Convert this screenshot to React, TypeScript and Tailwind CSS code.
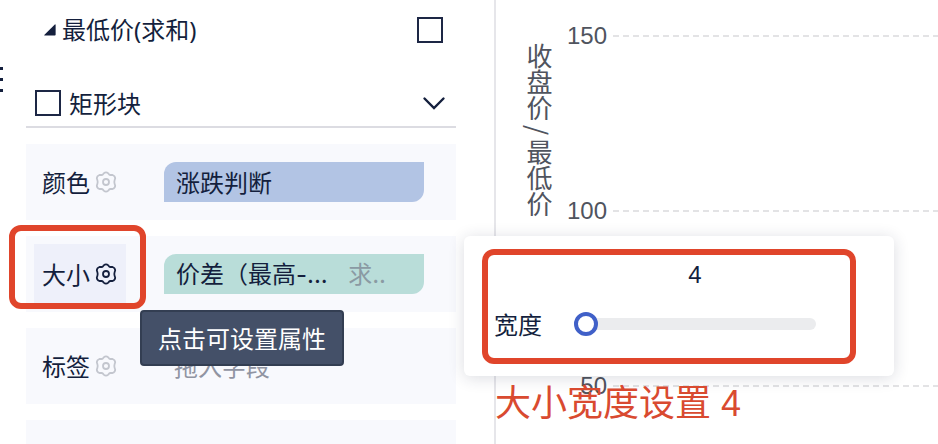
import { useState } from "react";

const INK = "text-[#141f3d]";

function GearIcon() {
  return (
    <svg className="h-6 w-6" viewBox="0 0 24 24" fill="none" stroke="currentColor" strokeWidth={1.8}>
      <path
        strokeLinejoin="round"
        d="M9.7 3.4Q12 1.4 14.3 3.4L15 4.3Q15.7 5.1 16.8 5L18.6 5Q21 5.8 21.2 8.3L20.6 10.2Q20 12 20.6 13.8L21.2 15.7Q21 18.2 18.6 19L16.8 19Q15.7 18.9 15 19.7L14.3 20.6Q12 22.6 9.7 20.6L9 19.7Q8.3 18.9 7.2 19L5.4 19Q3 18.2 2.8 15.7L3.4 13.8Q4 12 3.4 10.2L2.8 8.3Q3 5.8 5.4 5L7.2 5Q8.3 5.1 9 4.3Z"
      />
      <circle cx="12" cy="12" r="3" />
    </svg>
  );
}

interface FieldRowProps {
  label: string;
  active?: boolean;
  children: React.ReactNode;
}

function FieldRow({ label, active = false, children }: FieldRowProps) {
  return (
    <div className="flex h-[76px] shrink-0 items-center bg-[#f8f9fd] pr-8 pl-2">
      <button
        type="button"
        className={`mr-[38px] flex h-[60px] w-[92px] shrink-0 items-center gap-1 pl-2 ${
          active ? "bg-[#eef0fa]" : ""
        }`}
      >
        <span>{label}</span>
        <span className={active ? INK : "text-[#c3c6ce]"}>
          <GearIcon />
        </span>
      </button>
      {children}
    </div>
  );
}

function Checkbox({ label }: { label: string }) {
  return (
    <input
      type="checkbox"
      aria-label={label}
      className="h-[26px] w-[26px] shrink-0 appearance-none border-2 border-[#1d2745] checked:bg-[#1d2745]"
    />
  );
}

function Sidebar() {
  return (
    <aside className="flex w-[496px] shrink-0 border-r-2 border-[#e6e6ea] pr-[38px]">
      {/* Collapsed menu edge */}
      <div className="flex w-[26px] shrink-0 flex-col gap-2 pt-[67px]">
        <span className="h-[3px] w-[3px] bg-[#141f3d]" />
        <span className="h-[3px] w-[3px] bg-[#141f3d]" />
        <span className="h-[3px] w-[3px] bg-[#141f3d]" />
      </div>

      <div className="flex flex-1 flex-col">
        <div className="flex h-[60px] shrink-0 items-center pr-[13px] pl-[18px]">
          <svg className="mr-[6px] h-3 w-3" viewBox="0 0 12 12" fill="currentColor">
            <path d="M10.8 0.4Q11.6 0 11.6 1V10.8Q11.6 11.6 10.8 11.6H0.8Q-0.2 11.6 0.5 10.8Z" />
          </svg>
          <span className="flex-1 font-['Noto_Sans','Noto_Sans_CJK_SC',sans-serif]">最低价(求和)</span>
          <Checkbox label="最低价(求和)" />
        </div>

        <div className="mt-5 flex h-12 shrink-0 items-center border-b-2 border-[#dcdce2] pr-[10px] pl-[9px]">
          <label className="flex flex-1 items-center gap-2">
            <Checkbox label="矩形块" />
            矩形块
          </label>
          <button type="button" aria-label="展开">
            <svg className="h-6 w-6" viewBox="0 0 24 24" fill="none" stroke="currentColor" strokeWidth={2.4}>
              <path strokeLinecap="round" d="M2.5 7.5L12 17L21.5 7.5" />
            </svg>
          </button>
        </div>

        <div className="mt-4 flex flex-col gap-4">
          <FieldRow label="颜色">
            <div className="flex h-10 flex-1 items-center rounded-tl-xl rounded-br-xl bg-[#b2c4e4] px-3">
              涨跌判断
            </div>
          </FieldRow>
          <FieldRow label="大小" active>
            <div className="flex h-10 flex-1 items-center justify-between rounded-tl-xl rounded-br-xl bg-[#b9ddd9] pr-[38px] pl-3 whitespace-nowrap">
              <span>
                价差（最高<span className="font-['Inter',sans-serif]">-...</span>
              </span>
              <span className="text-[#8a9aa3]">
                求<span className="font-['Inter',sans-serif]">..</span>
              </span>
            </div>
          </FieldRow>
          <FieldRow label="标签">
            <div className="flex-1 pl-[10px] text-[#9094a2]">拖入字段</div>
          </FieldRow>
          {/* Next card, scrolled out of view */}
          <div className="h-[76px] shrink-0 bg-[#f8f9fd]" />
        </div>
      </div>
    </aside>
  );
}

function Chart() {
  return (
    <main className="flex min-w-0 flex-1 pl-[30px] text-[#50545e]">
      <div className="mt-[43px] w-[26px] text-[26px] leading-[26px] whitespace-nowrap [writing-mode:vertical-rl]">
        收盘价<span className="mx-1">/</span>最低价
      </div>
      <div className="flex flex-1 flex-col gap-[151px] pt-6 pl-[15px] font-['Liberation_Sans',sans-serif]">
        {[150, 100, 50].map((tick) => (
          <div key={tick} className="flex h-6 shrink-0 items-center gap-[6px]">
            <span className="w-10 text-right">{tick}</span>
            <span className="h-[2px] flex-1 bg-[repeating-linear-gradient(90deg,#e3e3e5_0_6px,transparent_6px_10px)]" />
          </div>
        ))}
      </div>
    </main>
  );
}

function WidthPopover() {
  const [width, setWidth] = useState(4);

  return (
    <div className="absolute top-[236px] left-[464px] flex h-[140px] w-[430px] items-end rounded-md bg-white pr-[78px] pb-10 pl-[30px] shadow-[0_2px_16px_rgba(30,40,70,0.16)]">
      <label htmlFor="width" className="w-20 leading-6">
        宽度
      </label>
      <div className="flex flex-1 flex-col items-center gap-[25px]">
        <output htmlFor="width" className="font-['Liberation_Sans',sans-serif] leading-6">
          {width}
        </output>
        <input
          id="width"
          type="range"
          min={4}
          max={100}
          value={width}
          onChange={(e) => setWidth(Number(e.target.value))}
          className="h-6 w-full appearance-none bg-transparent [&::-webkit-slider-runnable-track]:h-3 [&::-webkit-slider-runnable-track]:rounded-full [&::-webkit-slider-runnable-track]:bg-[#ebecee] [&::-webkit-slider-thumb]:-mt-[6px] [&::-webkit-slider-thumb]:h-6 [&::-webkit-slider-thumb]:w-6 [&::-webkit-slider-thumb]:appearance-none [&::-webkit-slider-thumb]:rounded-full [&::-webkit-slider-thumb]:border-4 [&::-webkit-slider-thumb]:border-[#4060c8] [&::-webkit-slider-thumb]:bg-white"
        />
      </div>
    </div>
  );
}

export default function App() {
  return (
    <div
      className={`relative flex h-screen overflow-hidden bg-white font-['Noto_Sans_CJK_SC',sans-serif] text-2xl leading-8 ${INK}`}
    >
      <Sidebar />
      <Chart />
      <WidthPopover />

      <div
        role="tooltip"
        className="absolute top-[310px] left-[140px] rounded-sm border-2 border-[#333e52] bg-[#445068] px-4 py-[10px] whitespace-nowrap text-white"
      >
        点击可设置属性
      </div>

      {/* Annotations */}
      <div className="pointer-events-none absolute top-[225px] left-[9px] h-[84px] w-[137px] rounded-xl border-[6px] border-[#e0452b]" />
      <div className="pointer-events-none absolute top-[249px] left-[482px] h-[115px] w-[374px] rounded-xl border-[6px] border-[#e0452b]" />
      <p className="absolute top-[384px] left-[495px] font-['Liberation_Sans','Noto_Sans_CJK_SC',sans-serif] text-4xl whitespace-nowrap text-[#d94a30]">
        大小宽度设置 4
      </p>
    </div>
  );
}
